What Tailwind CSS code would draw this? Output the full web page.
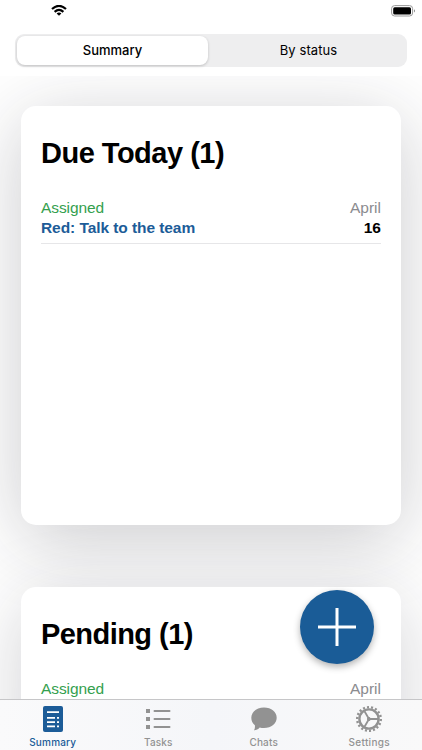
<!DOCTYPE html>
<html lang="en">
<head>
    <meta charset="UTF-8">
    <meta name="viewport" content="width=device-width, initial-scale=1.0">
    <title>Summary</title>
    <script src="https://cdn.jsdelivr.net/npm/@tailwindcss/browser@4"></script>
</head>
<body class="bg-white font-['Liberation_Sans',Arial,sans-serif]">
    <div class="relative flex h-screen flex-col overflow-hidden">
        <!-- Header -->
        <header class="h-[76px] shrink-0 bg-white">
            <div class="flex h-[34px] items-start justify-between pt-[5px] pr-[6px] pl-[51px]">
                <svg class="h-[11px] w-[16px]" viewBox="0 0 16 11" fill="none" stroke="#000" stroke-width="2.2">
                    <path d="M1 4Q8 -2.2 15 4" />
                    <path d="M3.6 6.8Q8 3 12.4 6.8" />
                    <path d="M8 10.8L5.6 8.5Q8 6.7 10.4 8.5Z" fill="#000" stroke="none" />
                </svg>
                <svg class="h-[12px] w-[25px]" viewBox="0 0 25 12">
                    <rect x=".6" y=".6" width="21" height="10.4" rx="3" fill="none" stroke="#999" />
                    <rect x="2.2" y="2.2" width="17.8" height="7.2" rx="1.5" />
                    <path d="M23 4.2Q25 5.8 23 7.4Z" fill="#888" />
                </svg>
            </div>
            <div class="mx-[15px] grid h-[33px] grid-cols-[191px_1fr] rounded-[9px] bg-[#eeeeef] p-[2px] font-['Inter',sans-serif] text-[13px]">
                <button class="rounded-[8px] bg-white font-medium shadow-[0_1px_3px_rgba(0,0,0,0.2)]">Summary</button>
                <button class="pl-1 tracking-[0.1px]">By status</button>
            </div>
        </header>

        <!-- Cards -->
        <main class="flex flex-1 flex-col gap-[62px] overflow-hidden bg-white px-[21px] pt-[30px]">
            <section class="h-[419px] shrink-0 rounded-[15px] bg-white px-5 pt-[29px] shadow-[0_14px_76px_rgba(30,30,45,0.23)]">
                <h1 class="h-[63px] text-[29px] leading-[36px] font-bold tracking-[-0.5px]">Due Today (1)</h1>
                <div class="flex h-[46px] justify-between border-b border-[#e6e6e8] leading-[20px]">
                    <div>
                        <p class="text-[15.5px] tracking-[-0.1px] text-[#34a04e]">Assigned</p>
                        <p class="text-[15.5px] font-bold tracking-[-0.07px] text-[#1c5c98]">Red: Talk to the team</p>
                    </div>
                    <div class="text-right">
                        <p class="text-[15.5px] text-[#8b8b8f]">April</p>
                        <p class="text-[15.5px] font-bold">16</p>
                    </div>
                </div>
            </section>
            <section class="h-[419px] shrink-0 rounded-[15px] bg-white px-5 pt-[29px] shadow-[0_14px_76px_rgba(30,30,45,0.2)]">
                <h1 class="h-[63px] text-[29px] leading-[36px] font-bold tracking-[-0.55px]">Pending (1)</h1>
                <div class="flex justify-between leading-[20px]">
                    <p class="text-[15.5px] tracking-[-0.1px] text-[#34a04e]">Assigned</p>
                    <p class="text-[15.5px] text-[#8b8b8f]">April</p>
                </div>
            </section>
        </main>

        <!-- Add button -->
        <button class="absolute right-[48px] bottom-[86px] flex size-[74px] items-center justify-center rounded-full bg-[#1a5c97] shadow-[0_3px_7px_rgba(0,0,0,0.3)]">
            <svg class="size-[38px]" viewBox="0 0 38 38" stroke="#fff" stroke-width="3">
                <path d="M19 0V38M0 19H38" />
            </svg>
        </button>

        <!-- Tab bar -->
        <nav class="relative grid h-[51px] shrink-0 grid-cols-4 border-t border-[#c6c6c8] bg-linear-to-r from-[#fafafb] via-[#f5f6f9] to-[#f9f9f9] font-['Inter',sans-serif] text-[10px] font-medium tracking-[0.2px] text-[#929292]">
            <a class="flex flex-col items-center pt-[5px] text-[#1c5c98]">
                <svg class="size-[28px]" viewBox="0 0 28 28">
                    <rect x="4" y="1" width="20" height="26" rx="2" fill="currentColor" />
                    <path d="M8 7.2H20M8 12.9H16M8 17.2H16M8 21.4H16M18 12.9H20M18 17.2H20M18 21.4H20" stroke="#fff" stroke-width="1.8" />
                </svg>
                <span class="mt-[2px] leading-[15px]">Summary</span>
            </a>
            <a class="flex flex-col items-center pt-[5px]">
                <svg class="size-[28px]" viewBox="0 0 28 28">
                    <path d="M2 4h4v4h-4zM2 12h4v4h-4zM2 20h4v4h-4z" fill="currentColor" />
                    <path d="M10.5 6H25.5M10.5 14H25.5M10.5 22H25.5" stroke="currentColor" stroke-width="2" stroke-linecap="round" />
                </svg>
                <span class="mt-[2px] leading-[15px] tracking-[0.1px]">Tasks</span>
            </a>
            <a class="flex flex-col items-center pt-[5px]">
                <svg class="size-[28px]" viewBox="0 0 28 28" fill="currentColor">
                    <path d="M14 2.5C21.5 2.5 26.7 7 26.7 12.7S21.5 23 14 23C12.4 23 11 22.8 9.7 22.4C8.2 24.2 6.3 25.1 4.1 25.2C4.9 23.8 5.1 22.2 4.9 20.3C2.6 18.4 1.3 15.8 1.3 12.7C1.3 7 6.5 2.5 14 2.5Z" />
                </svg>
                <span class="mt-[2px] leading-[15px]">Chats</span>
            </a>
            <a class="flex flex-col items-center pt-[5px]">
                <svg class="size-[28px]" viewBox="0 0 28 28" fill="none" stroke="currentColor">
                    <circle cx="14" cy="14" r="9.6" stroke-width="2.4" />
                    <circle cx="14" cy="14" r="11.8" stroke-width="2.4" pathLength="180" stroke-dasharray="5 5" />
                    <path d="M14 14H23M14 14L9.5 6.2M14 14L9.5 21.8" stroke-width="1.8" />
                    <circle cx="14" cy="14" r="1.5" fill="currentColor" />
                </svg>
                <span class="mt-[2px] leading-[15px] tracking-[0.3px]">Settings</span>
            </a>
        </nav>
    </div>
</body>
</html>
